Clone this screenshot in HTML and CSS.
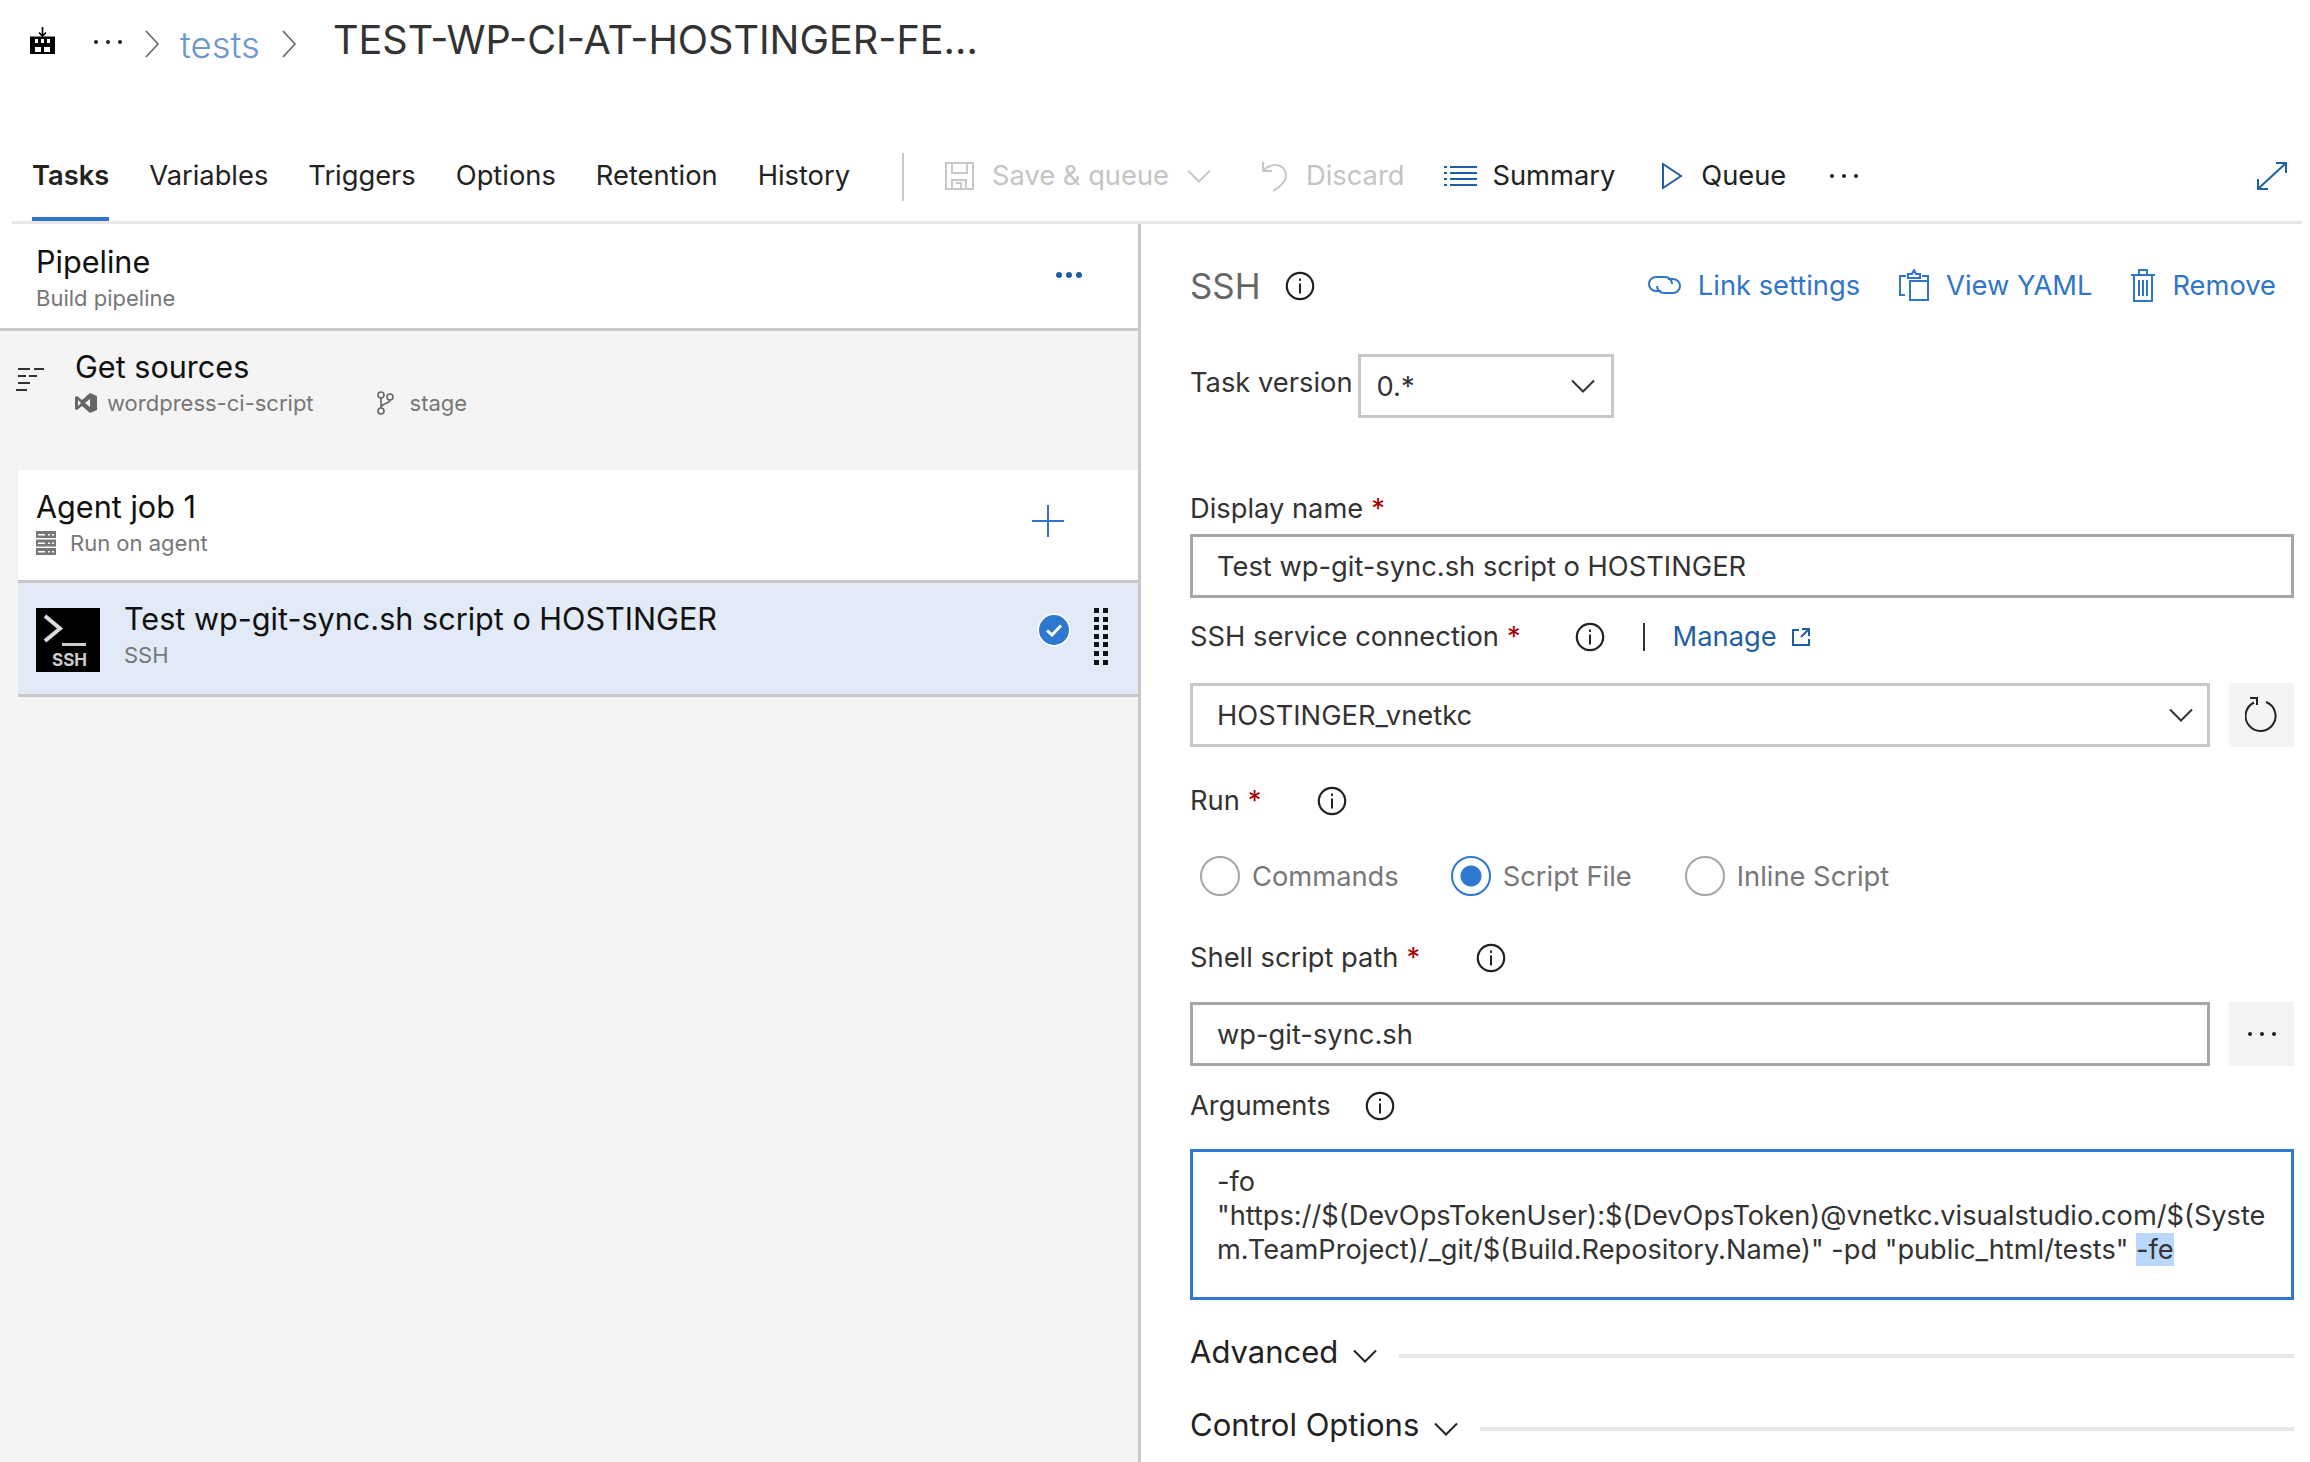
FILE: index.html
```html
<!DOCTYPE html>
<html lang="en">
<head>
    <meta charset="UTF-8">
    <title>TEST-WP-CI-AT-HOSTINGER-FE</title>
    <link rel="stylesheet" href="styles.css">
</head>
<body>

<svg class="defs" width="0" height="0">
    <symbol id="info" viewBox="0 0 30 30">
        <circle cx="15" cy="15" r="13.2" fill="none" stroke="currentColor" stroke-width="2.2"/>
        <rect x="14" y="12.5" width="2" height="10" fill="currentColor"/>
        <rect x="14" y="7.5" width="2" height="2.4" fill="currentColor"/>
    </symbol>
    <symbol id="chevron" viewBox="0 0 24 14">
        <path d="M1 1.5 12 12.5 23 1.5" fill="none" stroke="currentColor" stroke-width="2"/>
    </symbol>
</svg>

<!-- Breadcrumb -->
<div class="crumbs">
    <svg class="crumb-logo" width="25" height="27" viewBox="0 0 25 27">
        <path d="M12.500 0v9M9 5.500 12.500 9 16 5.500" fill="none" stroke="#000" stroke-width="1.600"/>
        <path d="M0 9.500h25V27H0z" fill="#000"/>
        <path d="M5 12h3v4H5zM11 12h3v4h-3zM17 12h3v4h-3zM5 20h6v5H5zM14 20h6v5h-6z" fill="#fff"/>
    </svg>
    <span class="dots crumb-dots"><i></i><i></i><i></i></span>
    <svg class="crumb-sep" width="16" height="28" viewBox="0 0 16 28"><path d="M2 1 14 14 2 27" fill="none" stroke="#666" stroke-width="1.600"/></svg>
    <span class="crumb-link">tests</span>
    <svg class="crumb-sep sep-two" width="16" height="28" viewBox="0 0 16 28"><path d="M2 1 14 14 2 27" fill="none" stroke="#666" stroke-width="1.600"/></svg>
    <span class="crumb-title">TEST-WP-CI-AT-HOSTINGER-FE...</span>
</div>

<!-- Tabs and commands -->
<div class="toolbar">
    <a class="tab active">Tasks</a>
    <a class="tab">Variables</a>
    <a class="tab">Triggers</a>
    <a class="tab">Options</a>
    <a class="tab">Retention</a>
    <a class="tab">History</a>
    <span class="tool-sep"></span>
    <svg class="save-icon" width="29" height="28" viewBox="0 0 29 28" fill="none" stroke="#c8c8c8" stroke-width="2">
        <path d="M1 1h27v26H1z"/><path d="M7 1v10h15V1M7 27v-9h14v9M11 21h5v6"/>
    </svg>
    <span class="cmd disabled save-text">Save &amp; queue</span>
    <svg class="save-caret" width="24" height="14"><use href="#chevron" color="#c8c8c8"/></svg>
    <svg class="discard-icon" width="28" height="32" viewBox="0 0 28 32" fill="none" stroke="#c8c8c8" stroke-width="2">
        <path d="M2 2v9h9M2 11C8 4 18 3 23 9c5 7 1 15-11 22"/>
    </svg>
    <span class="cmd disabled discard-text">Discard</span>
    <svg class="summary-icon" width="33" height="22" viewBox="0 0 33 22" fill="#1f5fa5">
        <path d="M0 1h3v2H0zM6 1h27v2H6zM0 7h3v2H0zM6 7h27v2H6zM0 13h3v2H0zM6 13h27v2H6zM0 19h3v2H0zM6 19h27v2H6z"/>
    </svg>
    <span class="cmd summary-text">Summary</span>
    <svg class="queue-icon" width="22" height="28" viewBox="0 0 22 28"><path d="M2 2 20 14 2 26z" fill="none" stroke="#1f5fa5" stroke-width="2"/></svg>
    <span class="cmd queue-text">Queue</span>
    <span class="dots tool-dots"><i></i><i></i><i></i></span>
    <svg class="expand-icon" width="30" height="28" viewBox="0 0 30 28" fill="none" stroke="#1f5fa5" stroke-width="2">
        <path d="M2 26 28 2M19 1h10v10M1 17v10h10"/>
    </svg>
</div>

<div class="main">

    <!-- Left pane -->
    <div class="left">
        <div class="pipeline">
            <div>
                <div class="row-title">Pipeline</div>
                <div class="row-sub">Build pipeline</div>
            </div>
            <span class="pipeline-dots"><i></i><i></i><i></i></span>
        </div>

        <div class="sources">
            <svg class="sources-icon" width="28" height="24" viewBox="0 0 28 24" fill="#333">
                <path d="M2 0h12v2H2zM18 0h10v2H18zM2 7h8v2H2zM13 7h8v2h-8zM2 14h12v2H2zM0 21h11v2H0z"/>
            </svg>
            <div>
                <div class="row-title">Get sources</div>
                <div class="row-sub source-meta">
                    <svg width="22" height="22" viewBox="0 0 22 22" fill="#666"><path d="M0 5l2-1 5 4 8-7 7 3v14l-7 3-8-7-5 4-2-1zM3 8v6l3-3zM15 7l-5 4 5 4z"/></svg>
                    <span class="repo">wordpress-ci-script</span>
                    <svg class="branch" width="18" height="24" viewBox="0 0 18 24" fill="none" stroke="#666" stroke-width="1.600"><circle cx="5" cy="4" r="3"/><circle cx="5" cy="20" r="3"/><circle cx="14" cy="6" r="3"/><path d="M5 7v10M14 9c0 4-9 3-9 8"/></svg>
                    <span>stage</span>
                </div>
            </div>
        </div>

        <div class="agent">
            <div>
                <div class="row-title">Agent job 1</div>
                <div class="row-sub agent-meta">
                    <svg width="20" height="24" viewBox="0 0 20 24" fill="#777"><path d="M0 0h20v7H0zM0 8.500h20v7H0zM0 17h20v7H0z"/><path d="M2 3h7v1.500H2zM12 3h2v1.500h-2zM16 3h2v1.500h-2zM2 11.500h7V13H2zM12 11.500h2V13h-2zM16 11.500h2V13h-2zM2 20h7v1.500H2zM12 20h2v1.500h-2zM16 20h2v1.500h-2z" fill="#fff"/></svg>
                    <span>Run on agent</span>
                </div>
            </div>
            <svg class="plus" width="32" height="32" viewBox="0 0 32 32"><path d="M16 0v32M0 16h32" stroke="#2f75c9" stroke-width="2"/></svg>
        </div>

        <div class="task">
            <div class="ssh-logo">
                <svg width="64" height="64" viewBox="0 0 64 64"><path d="M9 8 24 20.500 9 33" fill="none" stroke="#ddd" stroke-width="4"/><path d="M26 35h24v3H26z" fill="#ccc"/></svg>
                <span class="ssh-logo-text">SSH</span>
            </div>
            <div class="task-text">
                <div class="row-title">Test wp-git-sync.sh script o HOSTINGER</div>
                <div class="row-sub">SSH</div>
            </div>
            <svg class="task-check" width="34" height="34" viewBox="0 0 34 34">
                <circle cx="17" cy="17" r="16.500" fill="#fff"/>
                <circle cx="17" cy="17" r="15" fill="#2f78d0"/>
                <path d="M10 17.500 15 22 24 12.500" fill="none" stroke="#fff" stroke-width="3"/>
            </svg>
            <div class="gripper">
                <i></i><i></i><i></i><i></i><i></i><i></i><i></i><i></i><i></i><i></i><i></i><i></i><i></i><i></i>
            </div>
        </div>
    </div>

    <!-- Task settings -->
    <div class="right">
        <div class="head">
            <span class="head-title">SSH</span>
            <svg class="info head-info" width="30" height="30"><use href="#info"/></svg>
            <span class="head-links">
                <a class="head-link">
                    <svg width="33" height="24" viewBox="0 0 33 24" fill="none" stroke="#2f75c9" stroke-width="2"><path d="M13 18H8A7 7 0 0 1 8 4h9a7 7 0 0 1 7 7"/><path d="M20 6h5a7 7 0 0 1 0 14h-9a7 7 0 0 1-7-7"/></svg>
                    Link settings
                </a>
                <a class="head-link">
                    <svg width="30" height="33" viewBox="0 0 30 33" fill="none" stroke="#2f75c9" stroke-width="2"><path d="M6 26H1V7h6M23 7h6v24H11V12h18"/><path d="M9 9V5h4l2-4 2 4h4v4z"/></svg>
                    View YAML
                </a>
                <a class="head-link">
                    <svg width="24" height="33" viewBox="0 0 24 33" fill="none" stroke="#2f75c9" stroke-width="2"><path d="M0 6h24M8 6V1h8v5M3 6v26h18V6M8 11v16M12 11v16M16 11v16"/></svg>
                    Remove
                </a>
            </span>
        </div>

        <div class="version-row">
            <span class="label">Task version</span>
            <div class="box version-box">
                <span>0.*</span>
                <svg width="24" height="14"><use href="#chevron"/></svg>
            </div>
        </div>

        <div class="label display-label">Display name <b>*</b></div>
        <div class="box display-box">Test wp-git-sync.sh script o HOSTINGER</div>

        <div class="label conn-label">
            SSH service connection <b>*</b>
            <svg class="info conn-info" width="30" height="30"><use href="#info"/></svg>
            <span class="pipe"></span>
            <a class="manage">Manage</a>
            <svg class="manage-icon" width="18" height="18" viewBox="0 0 18 18" fill="none" stroke="#1f5fa5" stroke-width="2"><path d="M7 2H1v15h16v-6M10 1h7v7M17 1 9 9"/></svg>
        </div>
        <div class="box-row conn-row">
            <div class="box grow conn-box">
                <span>HOSTINGER_vnetkc</span>
                <svg width="24" height="14"><use href="#chevron"/></svg>
            </div>
            <div class="side-btn">
                <svg class="refresh" width="34" height="36" viewBox="0 0 34 36" fill="none" stroke="#222" stroke-width="2">
                    <path d="M21 6A15 15 0 1 1 9 6.500M5 2h7v7"/>
                </svg>
            </div>
        </div>

        <div class="label run-label">
            Run <b>*</b>
            <svg class="info run-info" width="30" height="30"><use href="#info"/></svg>
        </div>
        <div class="radios">
            <label class="radio"><i class="dot"></i>Commands</label>
            <label class="radio second"><i class="dot on"></i>Script File</label>
            <label class="radio third"><i class="dot"></i>Inline Script</label>
        </div>

        <div class="label shell-label">
            Shell script path <b>*</b>
            <svg class="info shell-info" width="30" height="30"><use href="#info"/></svg>
        </div>
        <div class="box-row shell-row">
            <div class="box grow dark">wp-git-sync.sh</div>
            <div class="side-btn"><span class="dots"><i></i><i></i><i></i></span></div>
        </div>

        <div class="label args-label">
            Arguments
            <svg class="info args-info" width="30" height="30"><use href="#info"/></svg>
        </div>
        <div class="args">-fo<br>"https://$(DevOpsTokenUser):$(DevOpsToken)@vnetkc.visualstudio.com/$(Syste<br>m.TeamProject)/_git/$(Build.Repository.Name)" -pd "public_html/tests" <span class="selected">-fe</span></div>

        <div class="section advanced">
            <span>Advanced</span>
            <svg width="24" height="14"><use href="#chevron"/></svg>
            <span class="section-line"></span>
        </div>
        <div class="section control">
            <span>Control Options</span>
            <svg width="24" height="14"><use href="#chevron"/></svg>
            <span class="section-line"></span>
        </div>
    </div>
</div>

</body>
</html>
```

FILE: styles.css
```css
html, body {
    margin: 0;
    padding: 0;
    height: 1462px;
    overflow: hidden;
    background-color: #fff;
}
body {
    font-family: Inter, "Noto Sans", sans-serif;
    color: #333;
}
.defs {
    position: absolute;
}
svg {
    display: block;
    flex: none;
}
.dots {
    display: inline-flex;
    gap: 8px;
}
.dots i {
    width: 4px;
    height: 4px;
    border-radius: 50%;
    background-color: #222;
}

/* Breadcrumb */
.crumbs {
    height: 140px;
    box-sizing: border-box;
    padding: 26px 0 0 30px;
    display: flex;
    align-items: flex-start;
}
.crumb-logo {
    margin-top: 1px;
    margin-right: 39px;
}
.crumb-dots {
    margin-top: 14px;
    margin-right: 22px;
}
.crumb-sep {
    margin: 4px 0 0 0;
}
.crumb-link {
    margin: -4px 0 0 20px;
    font-size: 36.500px;
    font-weight: 300;
    line-height: 46px;
    color: #6c98cc;
}
.sep-two {
    margin-left: 21px;
}
.crumb-title {
    margin: -9px 0 0 36px;
    font-size: 39.600px;
    line-height: 46px;
    color: #333;
    white-space: nowrap;
}

/* Tabs */
.toolbar {
    height: 84px;
    margin: 0 8px 0 12px;
    padding-left: 20px;
    box-sizing: border-box;
    border-bottom: 3px solid #e8e8e8;
    display: flex;
    align-items: center;
    font-size: 27.300px;
    white-space: nowrap;
}
.tab {
    height: 81px;
    line-height: 72px;
    margin-right: 40px;
    box-sizing: border-box;
    color: #222;
}
.tab.active {
    font-weight: 600;
    border-bottom: 4px solid #2f75c9;
}
.tool-sep {
    width: 2px;
    height: 48px;
    margin: 0 41px 8px 12px;
    background-color: #c8c8c8;
}
.cmd {
    margin-bottom: 10px;
    color: #222;
}
.cmd.disabled {
    color: #c4c4c4;
}
.save-icon, .discard-icon, .summary-icon, .queue-icon, .save-caret, .tool-dots {
    margin-bottom: 10px;
}
.save-text {
    margin-left: 18px;
}
.save-caret {
    margin-left: 18px;
}
.discard-icon {
    margin-left: 50px;
}
.discard-text {
    margin-left: 17px;
}
.summary-icon {
    margin-left: 40px;
}
.summary-text {
    margin-left: 15px;
}
.queue-icon {
    margin-left: 46px;
}
.queue-text {
    margin-left: 18px;
}
.tool-dots {
    margin-left: 44px;
}
.expand-icon {
    margin-left: auto;
    margin-right: 15px;
    margin-bottom: 10px;
}

/* Layout */
.main {
    display: flex;
    height: 1238px;
}
.left {
    width: 1138px;
    flex: none;
    box-sizing: content-box;
    background-color: #f4f4f4;
    border-right: 3px solid #c8c8c8;
}
.right {
    flex: 1;
    min-width: 0;
    padding: 0 16px 0 49px;
}

/* Left pane rows */
.row-title {
    font-size: 30.600px;
    line-height: 38px;
    color: #111;
    white-space: nowrap;
}
.row-sub {
    font-size: 22px;
    line-height: 30px;
    margin-top: 2px;
    color: #777;
    white-space: nowrap;
}
.pipeline {
    height: 107px;
    box-sizing: border-box;
    padding: 19px 56px 0 36px;
    background-color: #fff;
    border-bottom: 3px solid #c8c8c8;
    display: flex;
    justify-content: space-between;
}
.pipeline-dots {
    display: flex;
    gap: 4px;
    padding-top: 29px;
}
.pipeline-dots i {
    width: 6px;
    height: 6px;
    border-radius: 50%;
    background-color: #1f5fa5;
}
.sources {
    height: 139px;
    box-sizing: border-box;
    padding: 17px 0 0 16px;
    display: flex;
}
.sources-icon {
    margin: 20px 31px 0 0;
}
.source-meta {
    display: flex;
    align-items: center;
}
.repo {
    margin: 0 62px 0 10px;
}
.branch {
    margin-right: 16px;
}
.agent {
    height: 113px;
    margin-left: 18px;
    box-sizing: border-box;
    padding: 18px 74px 0 18px;
    background-color: #fff;
    border-bottom: 3px solid #c8c8c8;
    display: flex;
    justify-content: space-between;
}
.agent-meta {
    display: flex;
    align-items: center;
    gap: 14px;
}
.plus {
    margin-top: 17px;
}
.task {
    height: 114px;
    margin-left: 18px;
    box-sizing: border-box;
    padding: 25px 30px 0 18px;
    background-color: #e1eaf6;
    border-bottom: 3px solid #c8c8c8;
    display: flex;
    align-items: flex-start;
}
.ssh-logo {
    position: relative;
    width: 64px;
    height: 64px;
    background-color: #000;
}
.ssh-logo-text {
    position: absolute;
    left: 16px;
    bottom: 3px;
    font-size: 17px;
    font-weight: 700;
    line-height: 18px;
    color: #ccc;
}
.task-text {
    margin: -8px auto 0 24px;
}
.task-check {
    margin: 5px 23px 0 0;
}
.gripper {
    display: grid;
    grid-template-columns: 5px 5px;
    grid-auto-rows: 5px;
    column-gap: 4px;
    row-gap: 3.600px;
}
.gripper i {
    background-color: #111;
}

/* Settings pane */
.head {
    height: 54px;
    margin-top: 35px;
    display: flex;
    align-items: center;
}
.head-title {
    font-size: 34.800px;
    color: #666;
}
.head-info {
    margin-left: 24px;
}
.info {
    color: #222;
}
.head-links {
    margin-left: auto;
    margin-right: 18px;
    display: flex;
    gap: 39px;
    margin-top: -2px;
}
.head-link {
    display: flex;
    align-items: center;
    gap: 17px;
    font-size: 27.300px;
    color: #2f75c9;
}
.version-row {
    display: flex;
    align-items: flex-start;
    margin-top: 41px;
}
.version-row .label {
    margin-top: 11px;
}
.label {
    font-size: 27.300px;
    line-height: 36px;
    color: #333;
    display: flex;
    align-items: center;
    white-space: nowrap;
}
.label b {
    font-weight: 400;
    color: #a80000;
    margin-left: 8px;
}
.box {
    height: 64px;
    box-sizing: border-box;
    padding: 0 24px;
    border: 3px solid #c8c8c8;
    display: flex;
    align-items: center;
    justify-content: space-between;
    font-size: 27.300px;
    color: #333;
}
.box.dark {
    border-color: #a6a6a6;
}
.version-box {
    width: 256px;
    margin-left: 5px;
    padding: 0 16px;
}
.display-label {
    margin-top: 73px;
}
.display-box {
    margin-top: 7px;
    border-color: #a6a6a6;
}
.conn-label {
    margin-top: 21px;
}
.conn-info {
    margin-left: 54px;
}
.pipe {
    width: 2px;
    height: 28px;
    margin-left: 38px;
    background-color: #333;
}
.manage {
    margin-left: 28px;
    color: #1f5fa5;
}
.manage-icon {
    margin-left: 15px;
}
.box-row {
    display: flex;
    gap: 19px;
}
.grow {
    flex: 1;
}
.conn-box {
    padding-right: 14px;
}
.side-btn {
    width: 65px;
    height: 64px;
    flex: none;
    background-color: #f4f4f4;
    display: flex;
    align-items: center;
    justify-content: center;
}
.refresh {
    margin-top: -2px;
}
.conn-row {
    margin-top: 28px;
}
.run-label {
    margin-top: 36px;
}
.run-info {
    margin-left: 55px;
}
.radios {
    margin-top: 37px;
    padding-left: 10px;
    display: flex;
}
.radio {
    display: flex;
    align-items: center;
    gap: 12px;
    height: 40px;
    font-size: 27.300px;
    color: #777;
}
.radio.second {
    margin-left: 52px;
}
.radio.third {
    margin-left: 53px;
}
.dot {
    width: 40px;
    height: 40px;
    box-sizing: border-box;
    border: 2px solid #a6a6a6;
    border-radius: 50%;
}
.dot.on {
    border-color: #2f78d0;
    background: radial-gradient(circle, #2f78d0 0 10px, transparent 11px);
}
.shell-label {
    margin-top: 44px;
}
.shell-info {
    margin-left: 56px;
}
.shell-row {
    margin-top: 26px;
}
.args-label {
    margin-top: 22px;
}
.args-info {
    margin-left: 34px;
}
.args {
    height: 151px;
    margin-top: 25px;
    box-sizing: border-box;
    padding: 13px 24px 0;
    border: 3px solid #2f78d0;
    font-size: 27.200px;
    line-height: 34px;
    color: #333;
    white-space: nowrap;
}
.selected {
    background-color: #b9d7fb;
}
.section {
    height: 40px;
    display: flex;
    align-items: center;
    font-size: 31px;
    color: #222;
}
.section svg {
    margin: 10px 0 0 15px;
}
.section-line {
    flex: 1;
    height: 4px;
    margin: 9px 0 0 22px;
    background-color: #e8e8e8;
}
.advanced {
    margin-top: 31px;
}
.control {
    margin-top: 33px;
}
```
